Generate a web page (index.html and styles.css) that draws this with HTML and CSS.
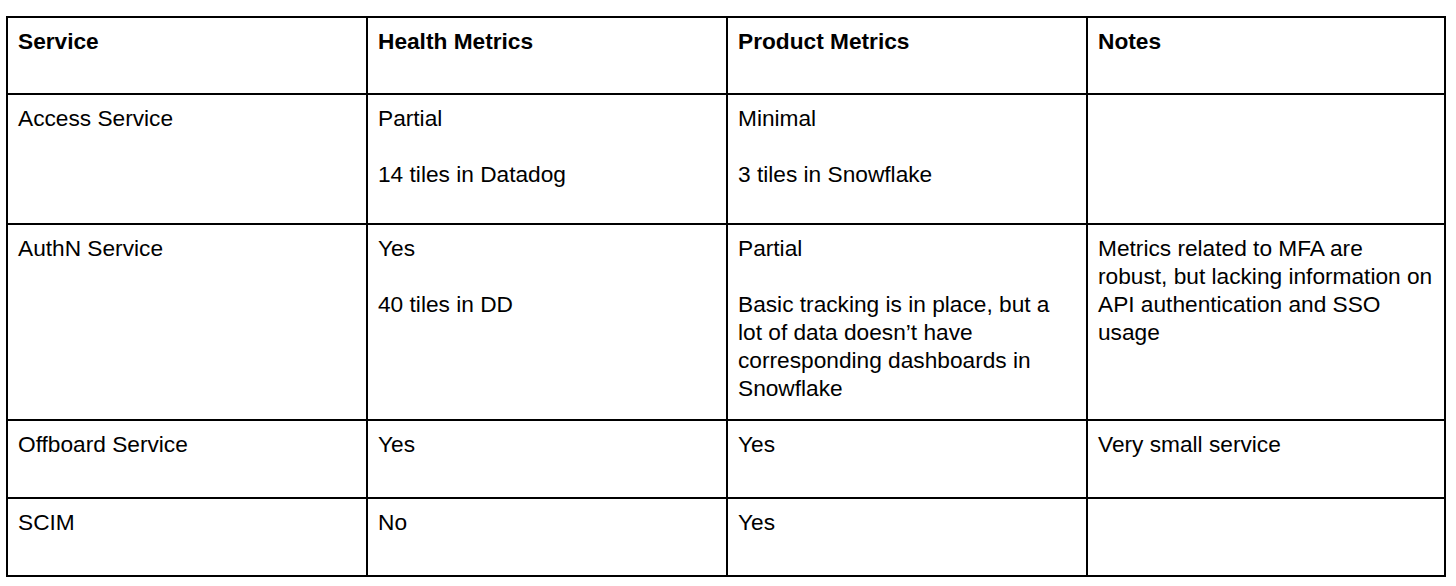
FILE: index.html
```html
<!DOCTYPE html>
<html lang="en">
<head>
<meta charset="utf-8">
<title>Service Metrics</title>
<link rel="stylesheet" href="styles.css">
</head>
<body>
<table class="metrics">
  <colgroup>
    <col class="c1"><col class="c2"><col class="c3"><col class="c4">
  </colgroup>
  <thead>
    <tr class="r-head">
      <th>Service</th>
      <th>Health Metrics</th>
      <th>Product Metrics</th>
      <th>Notes</th>
    </tr>
  </thead>
  <tbody>
    <tr class="r-access">
      <td>Access Service</td>
      <td><p>Partial</p><p>14 tiles in Datadog</p></td>
      <td><p>Minimal</p><p>3 tiles in Snowflake</p></td>
      <td></td>
    </tr>
    <tr class="r-authn">
      <td>AuthN Service</td>
      <td><p>Yes</p><p>40 tiles in DD</p></td>
      <td><p>Partial</p><p>Basic tracking is in place, but a lot of data doesn’t have corresponding dashboards in Snowflake</p></td>
      <td>Metrics related to MFA are robust, but lacking information on API authentication and SSO usage</td>
    </tr>
    <tr class="r-short">
      <td>Offboard Service</td>
      <td>Yes</td>
      <td>Yes</td>
      <td>Very small service</td>
    </tr>
    <tr class="r-short">
      <td>SCIM</td>
      <td>No</td>
      <td>Yes</td>
      <td></td>
    </tr>
  </tbody>
</table>
</body>
</html>
```

FILE: styles.css
```css
html, body {
  margin: 0;
  padding: 0;
  background: #ffffff;
}

body {
  padding: 16px 0 0 6px;
  font-family: "Liberation Sans", Arial, sans-serif;
  font-size: 22.7px;
  line-height: 28px;
  color: #000000;
}

.metrics {
  border-collapse: collapse;
  table-layout: fixed;
  width: 1439px;
}

.c1, .c2, .c3 { width: 360px; }
.c4 { width: 358px; }

.metrics th,
.metrics td {
  border: 2px solid #000000;
  padding: 9px 9px 10px 10px;
  vertical-align: top;
  text-align: left;
  font-weight: normal;
}

.metrics th {
  font-weight: bold;
}

.metrics p {
  margin: 0 0 28px;
}

.metrics p:last-child {
  margin-bottom: 0;
}

.r-head { height: 77px; }
.r-access { height: 130px; }
.r-authn { height: 196px; }
.r-short { height: 78px; }
```
